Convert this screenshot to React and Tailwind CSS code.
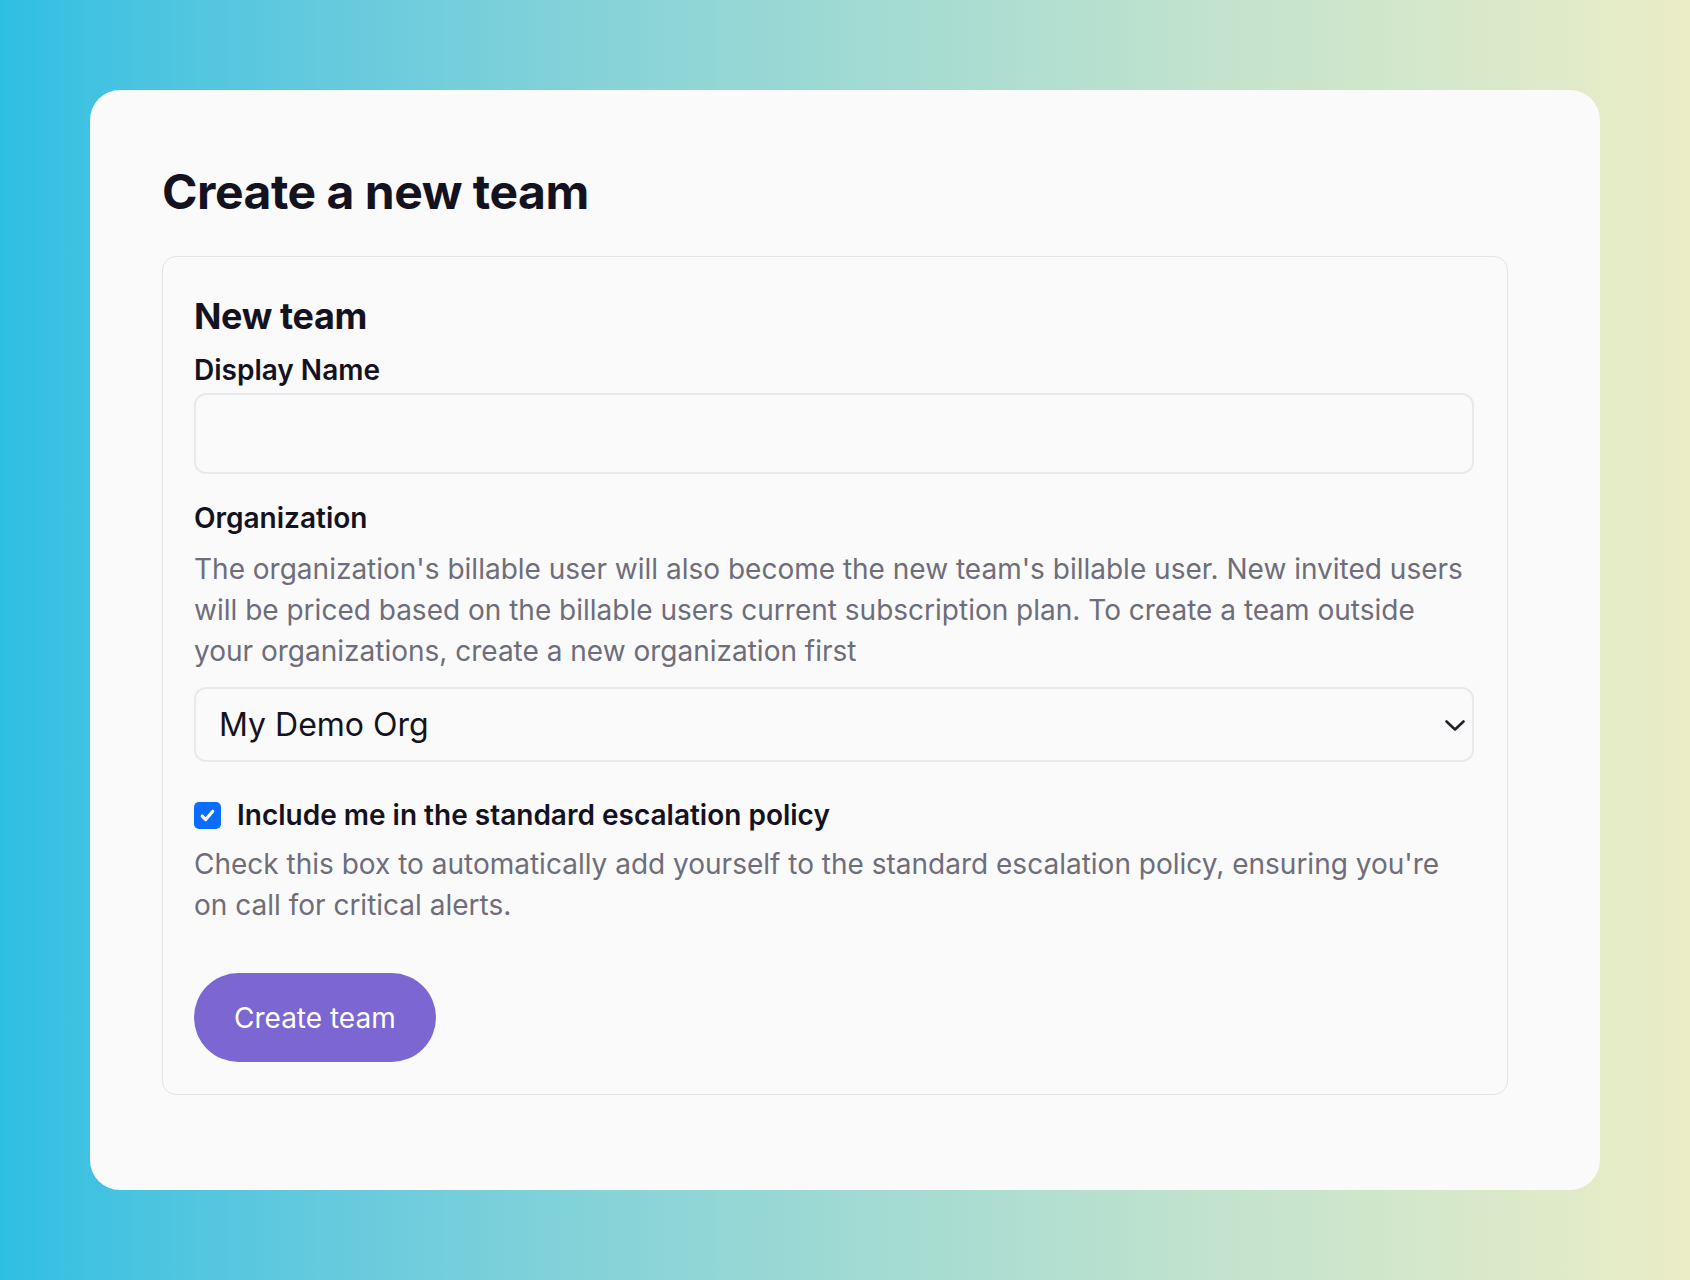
import React from 'react';

const font = { fontFamily: 'Inter, "Noto Sans", sans-serif' };

export default function App() {
    return (
        <div
            className="w-[1690px] h-[1280px] p-[90px] bg-gradient-to-r from-[#2dbfe3] via-[#9fdad3] to-[#ebedc6]"
            style={font}
        >
            <div className="w-[1510px] h-[1100px] rounded-[30px] bg-[#fafafa] pl-[72px] pt-[73px]">
                <h1 className="text-[48px] leading-[58px] font-bold tracking-[-0.01em] text-[#15121f]">Create a new team</h1>

                {/* Form box */}
                <div className="mt-[35px] w-[1346px] rounded-[14px] border border-[#e4e4e8] pl-[31px] pr-[33px] pt-[38px] pb-[32px]">
                    <h2 className="text-[36px] leading-[43px] font-bold tracking-[-0.01em] text-[#15121f]">New team</h2>

                    <label className="block mt-[11px] text-[28px] leading-[42px] font-semibold text-[#15121f]">Display Name</label>
                    <input
                        type="text"
                        className="mt-[2px] block w-full h-[81px] rounded-[12px] border-2 border-[#e9e9ed] bg-[#fafafa] outline-none"
                    />

                    <label className="block mt-[23px] text-[28px] leading-[42px] font-semibold text-[#15121f]">Organization</label>
                    <p className="mt-[10px] text-[28px] leading-[41px] text-[#6e6d7a]">
                        The organization's billable user will also become the new team's billable user. New invited users will be priced based on the billable users current subscription plan. To create a team outside your organizations, create a new organization first
                    </p>

                    <div className="mt-[15px] h-[75px] rounded-[12px] border-2 border-[#e9e9ed] flex items-center justify-between pl-[23px] pr-[6px]">
                        <span className="text-[32px] text-[#15121f]">My Demo Org</span>
                        <svg width="22" height="14" viewBox="0 0 22 14" fill="none">
                            <path d="M2.5 3.5l8.5 8 8.5-8" stroke="#22212b" strokeWidth="2.6" strokeLinecap="round" strokeLinejoin="round" />
                        </svg>
                    </div>

                    <div className="mt-[32px] flex items-center gap-[16px]">
                        <span className="w-[27px] h-[27px] rounded-[5px] bg-[#0b6cff] flex items-center justify-center">
                            <svg width="19" height="19" viewBox="0 0 18 18" fill="none">
                                <path d="M4 9.5l3.3 3.3L14 5" stroke="white" strokeWidth="3" strokeLinecap="round" strokeLinejoin="round" />
                            </svg>
                        </span>
                        <span className="text-[28px] leading-[42px] font-semibold text-[#15121f]">Include me in the standard escalation policy</span>
                    </div>
                    <p className="mt-[8px] text-[28px] leading-[41px] text-[#6e6d7a]">
                        Check this box to automatically add yourself to the standard escalation policy, ensuring you're on call for critical alerts.
                    </p>

                    <button className="mt-[47px] h-[89px] px-[40px] rounded-full bg-[#7b66d2] text-white text-[28px]">
                        Create team
                    </button>
                </div>
            </div>
        </div>
    );
}
